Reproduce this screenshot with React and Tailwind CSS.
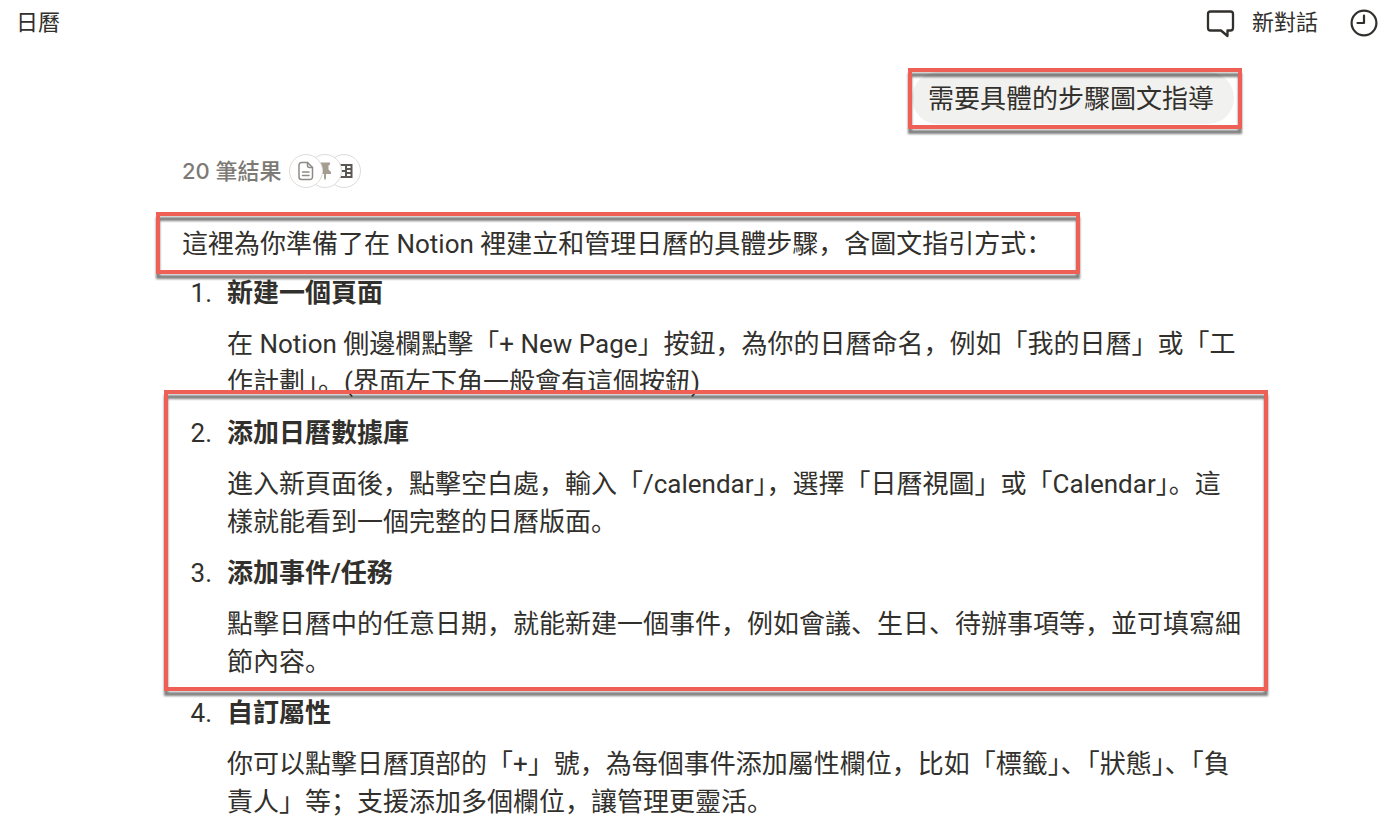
const steps = [
  {
    title: "新建一個頁面",
    desc: "在 Notion 側邊欄點擊「+ New Page」按鈕，為你的日曆命名，例如「我的日曆」或「工作計劃」。(界面左下角一般會有這個按鈕)",
  },
  {
    title: "添加日曆數據庫",
    desc: "進入新頁面後，點擊空白處，輸入「/calendar」，選擇「日曆視圖」或「Calendar」。這樣就能看到一個完整的日曆版面。",
  },
  {
    title: "添加事件/任務",
    desc: "點擊日曆中的任意日期，就能新建一個事件，例如會議、生日、待辦事項等，並可填寫細節內容。",
  },
  {
    title: "自訂屬性",
    desc: "你可以點擊日曆頂部的「+」號，為每個事件添加屬性欄位，比如「標籤」、「狀態」、「負責人」等；支援添加多個欄位，讓管理更靈活。",
  },
];

function ChatIcon() {
  return (
    <svg width="30" height="30" viewBox="0 0 30 30" fill="none" stroke="currentColor" strokeWidth="2.3" strokeLinejoin="round">
      <path d="M4.500 3.500h20A2.500 2.500 0 0 1 27 6v14a2.500 2.500 0 0 1-2.500 2.500H21.500v5.500L15 22.500H4.500A2.500 2.500 0 0 1 2 20V6A2.500 2.500 0 0 1 4.500 3.500z" />
    </svg>
  );
}

function ClockIcon() {
  return (
    <svg width="28" height="28" viewBox="0 0 28 28" fill="none" stroke="currentColor" strokeWidth="2.2" strokeLinecap="round" strokeLinejoin="round">
      <circle cx="14" cy="14" r="12.4" />
      <path d="M14 6.500V14H7.500" />
    </svg>
  );
}

function PageIcon() {
  return (
    <svg width="18" height="20" viewBox="0 0 18 20" fill="none" stroke="#8e8b86" strokeWidth="1.500" strokeLinecap="round" strokeLinejoin="round">
      <path d="M4.500 1.500h6l5 5v9.500a2.500 2.500 0 0 1-2.500 2.500H4.500A2.500 2.500 0 0 1 2 16V4a2.500 2.500 0 0 1 2.500-2.500z" />
      <path d="M10.500 1.500v3a2 2 0 0 0 2 2h3M5.500 11h6.500M5.500 14.500h6.500" />
    </svg>
  );
}

function PinIcon() {
  return (
    <svg width="16" height="20" viewBox="0 0 16 20" fill="#a69d92">
      <path d="M3 1.500h10v2l-1.500 1v4L14 11v2H9v4l-1 2.500L7 17v-4H2v-2l2.500-2.500v-4L3 3.500z" />
    </svg>
  );
}

function TableIcon() {
  return (
    <svg width="20" height="16" viewBox="0 0 20 16" fill="none" stroke="#5b5753" strokeWidth="2">
      <path d="M2 2h15.500v12H2zM2 8h10M12 2v12M12 6h5.500M12 10h5.500" />
    </svg>
  );
}

// red frame drawn on top of the content it points at
function Highlight({ className }) {
  return (
    <div
      aria-hidden="true"
      className={`pointer-events-none absolute border-4 border-[#ee6055] drop-shadow-[0_5px_1px_rgba(0,0,0,0.5)] ${className}`}
    />
  );
}

function App() {
  return (
    <div
      lang="zh-Hans"
      className="min-h-screen bg-white font-['Roboto','Noto_Sans_CJK_SC',sans-serif] text-[26px] leading-[38px] text-[#32302c]"
    >
      {/* Top bar */}
      <header className="flex h-[46px] items-center justify-between pr-[22px] pl-4 text-[22px]">
        <h1>日曆</h1>
        <div className="flex items-center gap-8">
          <button type="button" className="flex items-center gap-4">
            <ChatIcon />
            新對話
          </button>
          <button type="button" aria-label="歷史記錄">
            <ClockIcon />
          </button>
        </div>
      </header>

      <main className="mx-auto max-w-[1084px] pt-[26px] pl-6">
        {/* User message */}
        <div className="flex justify-end pr-2">
          <div className="relative">
            <p className="rounded-[26px] bg-[#f1f1ef] pt-2 pr-5 pb-1.5 pl-4">需要具體的步驟圖文指導</p>
            <Highlight className="-top-1 -right-2 -bottom-[5px] -left-1" />
          </div>
        </div>

        {/* Sources */}
        <div className="mt-[30px] flex items-center gap-[7px] font-['Inter','Noto_Sans_CJK_SC',sans-serif] text-[22px] leading-[34px] font-medium text-[#7d7a75]">
          <span>20 筆結果</span>
          <div className="flex -space-x-[15px]">
            <span className="z-20 flex size-[34px] items-center justify-center rounded-full border border-[#dddcda] bg-white">
              <PageIcon />
            </span>
            <span className="z-10 flex size-[34px] items-center justify-center rounded-full border border-[#dddcda] bg-white">
              <PinIcon />
            </span>
            <span className="flex size-[34px] items-center justify-center rounded-full border border-[#dddcda] bg-white">
              <TableIcon />
            </span>
          </div>
        </div>

        {/* Answer */}
        <div className="relative mt-[37px]">
          <p>這裡為你準備了在 Notion 裡建立和管理日曆的具體步驟，含圖文指引方式：</p>
          <Highlight className="-top-[13px] right-[162px] -bottom-[11px] -left-[26px]" />
        </div>

        <ol className="relative mt-[11px] space-y-[13px]">
          {steps.map((s, i) => (
            <li key={i} className="-mr-1 flex gap-[15px]">
              <span className="w-[30px] shrink-0 text-right">{i + 1}.</span>
              <div className="min-w-0 flex-1">
                <h2 className="font-bold">{s.title}</h2>
                <p className="mt-[13px]">{s.desc}</p>
              </div>
            </li>
          ))}
          <Highlight className="top-[116px] -right-[26px] bottom-[130px] -left-[18px]" />
        </ol>
      </main>
    </div>
  );
}

export default App;
